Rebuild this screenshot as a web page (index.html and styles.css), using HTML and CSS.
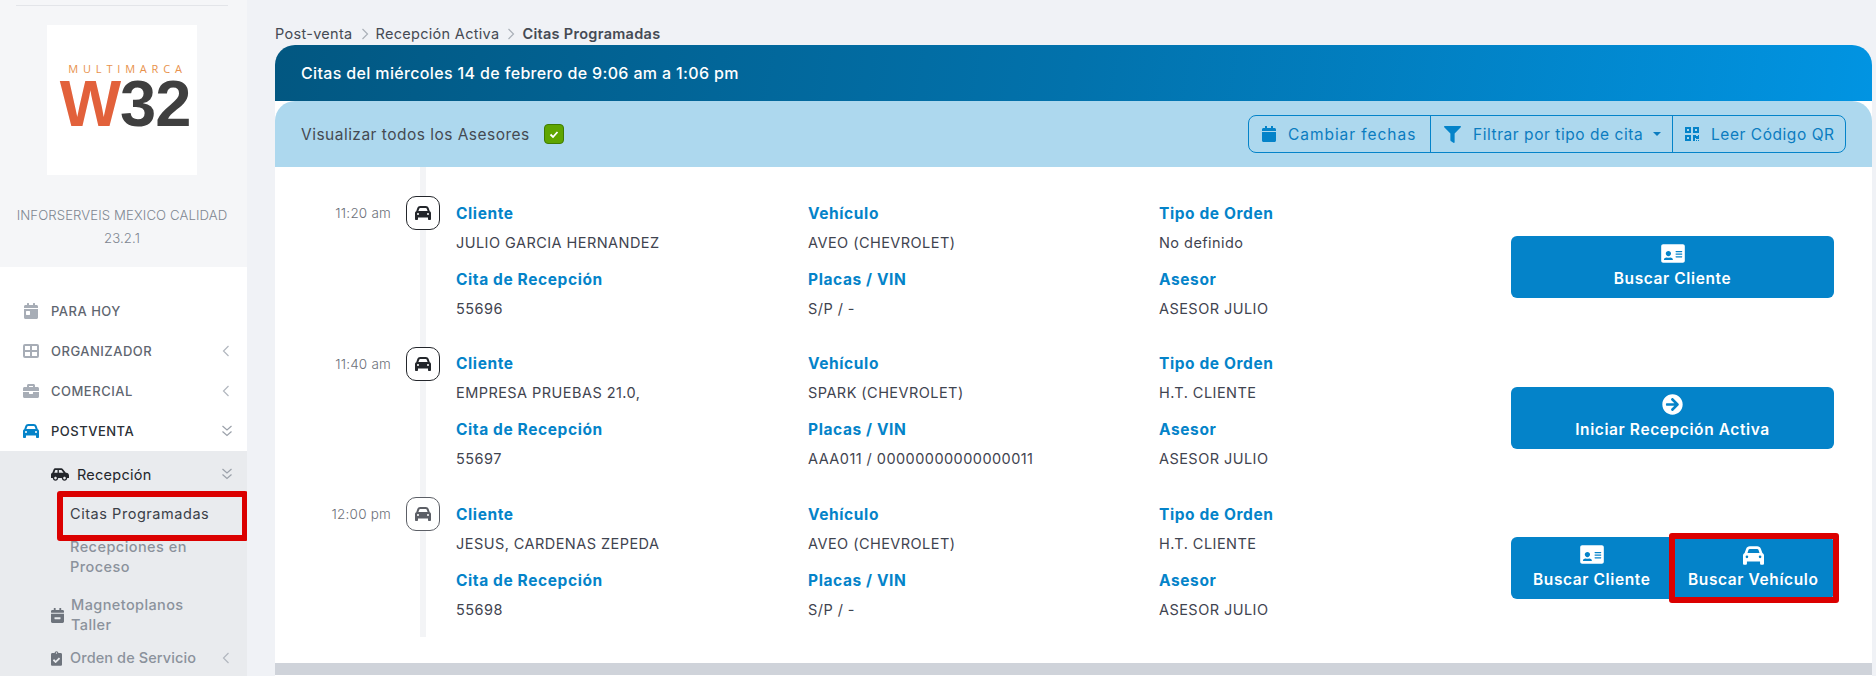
FILE: index.html
```html
<!DOCTYPE html>
<html lang="es">
<head>
<meta charset="utf-8">
<title>Citas Programadas</title>
<link rel="stylesheet" href="styles.css">
</head>
<body>
<svg class="defs" aria-hidden="true">
  <symbol id="i-car" viewBox="0 0 512 512"><path d="M135.2 117.4L109.1 192H402.9l-26.1-74.6C372.3 104.6 360.2 96 346.6 96H165.4c-13.6 0-25.7 8.6-30.2 21.4zM39.6 196.8L74.8 96.3C88.3 57.8 124.6 32 165.4 32H346.6c40.8 0 77.1 25.8 90.6 64.3l35.2 100.5c23.2 9.6 39.6 32.5 39.6 59.2V400v48c0 17.7-14.3 32-32 32H448c-17.7 0-32-14.3-32-32V400H96v48c0 17.7-14.3 32-32 32H32c-17.7 0-32-14.3-32-32V400 256c0-26.7 16.4-49.6 39.6-59.2zM128 288a32 32 0 1 0 -64 0 32 32 0 1 0 64 0zm288 32a32 32 0 1 0 0-64 32 32 0 1 0 0 64z"/></symbol>
  <symbol id="i-car-side" viewBox="0 0 640 512"><path d="M544 192h-16L419.22 56.02A64.025 64.025 0 0 0 369.24 32H155.33c-26.17 0-49.7 15.93-59.42 40.23L48 194.26C20.44 201.4 0 226.21 0 256v112c0 8.84 7.16 16 16 16h48c0 53.02 42.98 96 96 96s96-42.98 96-96h128c0 53.02 42.98 96 96 96s96-42.98 96-96h48c8.84 0 16-7.16 16-16v-80c0-53.02-42.98-96-96-96zM160 432c-26.47 0-48-21.53-48-48s21.53-48 48-48 48 21.53 48 48-21.53 48-48 48zm72-240H116.93l38.4-96H232v96zm48 0V96h89.24l76.8 96H280zm200 240c-26.47 0-48-21.53-48-48s21.53-48 48-48 48 21.53 48 48-21.53 48-48 48z"/></symbol>
  <symbol id="i-cal" viewBox="0 0 448 512"><path d="M12 192h424c6.6 0 12 5.4 12 12v260c0 26.5-21.5 48-48 48H48c-26.5 0-48-21.5-48-48V204c0-6.6 5.4-12 12-12zm436-44v-36c0-26.5-21.5-48-48-48h-48V12c0-6.6-5.4-12-12-12h-40c-6.6 0-12 5.4-12 12v52H160V12c0-6.6-5.4-12-12-12h-40c-6.6 0-12 5.4-12 12v52H48C21.5 64 0 85.5 0 112v36c0 6.6 5.4 12 12 12h424c6.6 0 12-5.4 12-12z"/></symbol>
  <symbol id="i-cal-day" viewBox="0 0 448 512"><path d="M0 464c0 26.5 21.5 48 48 48h352c26.5 0 48-21.5 48-48V192H0v272zm64-192c0-8.8 7.2-16 16-16h96c8.8 0 16 7.2 16 16v96c0 8.8-7.2 16-16 16H80c-8.8 0-16-7.2-16-16v-96zM400 64h-48V16c0-8.8-7.2-16-16-16h-32c-8.8 0-16 7.2-16 16v48H160V16c0-8.8-7.2-16-16-16h-32c-8.8 0-16 7.2-16 16v48H48C21.5 64 0 85.5 0 112v48h448v-48c0-26.5-21.5-48-48-48z"/></symbol>
  <symbol id="i-cal-minus" viewBox="0 0 448 512"><path d="M436 160H12c-6.6 0-12-5.4-12-12v-36c0-26.5 21.5-48 48-48h48V12c0-6.6 5.4-12 12-12h40c6.6 0 12 5.4 12 12v52h128V12c0-6.6 5.4-12 12-12h40c6.6 0 12 5.4 12 12v52h48c26.5 0 48 21.5 48 48v36c0 6.6-5.4 12-12 12zM12 192h424c6.6 0 12 5.4 12 12v260c0 26.5-21.5 48-48 48H48c-26.5 0-48-21.5-48-48V204c0-6.6 5.4-12 12-12zm304 192c6.6 0 12-5.4 12-12v-40c0-6.6-5.4-12-12-12H132c-6.6 0-12 5.4-12 12v40c0 6.6 5.4 12 12 12h184z"/></symbol>
  <symbol id="i-brief" viewBox="0 0 512 512"><path d="M320 336c0 8.84-7.16 16-16 16h-96c-8.84 0-16-7.16-16-16v-48H0v144c0 25.6 22.4 48 48 48h416c25.6 0 48-22.4 48-48V288H320v48zm144-208h-80V80c0-25.6-22.4-48-48-48H176c-25.6 0-48 22.4-48 48v48H48c-25.6 0-48 22.4-48 48v80h512v-80c0-25.6-22.4-48-48-48zm-144 0H192V96h128v32z"/></symbol>
  <symbol id="i-grid" viewBox="0 0 16 14"><path fill-rule="evenodd" d="M2 0h12a2 2 0 0 1 2 2v10a2 2 0 0 1-2 2H2a2 2 0 0 1-2-2V2a2 2 0 0 1 2-2zm0 2v4h5V2zm7 0v4h5V2zM2 8v4h5V8zm7 0v4h5V8z"/></symbol>
  <symbol id="i-clip" viewBox="0 0 384 512"><path d="M336 64h-80c0-35.3-28.7-64-64-64s-64 28.7-64 64H48C21.5 64 0 85.5 0 112v352c0 26.5 21.5 48 48 48h288c26.5 0 48-21.5 48-48V112c0-26.5-21.5-48-48-48zM192 40c13.3 0 24 10.7 24 24s-10.7 24-24 24-24-10.7-24-24 10.7-24 24-24zm121.2 231.8l-143 141.8c-4.7 4.7-12.3 4.6-17-.1l-82.6-83.3c-4.7-4.7-4.6-12.3.1-17L99.1 285c4.7-4.7 12.3-4.6 17 .1l46 46.4 106-105.2c4.7-4.7 12.3-4.6 17 .1l28.2 28.4c4.7 4.8 4.6 12.3-.1 17z"/></symbol>
  <symbol id="i-filter" viewBox="0 0 512 512"><path d="M487.976 0H24.028C2.71 0-8.047 25.866 7.058 40.971L192 225.941V432c0 7.831 3.821 15.17 10.237 19.662l80 55.98C298.02 518.69 320 507.493 320 487.98V225.941l184.947-184.97C520.021 25.896 509.338 0 487.976 0z"/></symbol>
  <symbol id="i-qr" viewBox="0 0 448 512"><path d="M0 224h192V32H0v192zM64 96h64v64H64V96zm192-64v192h192V32H256zm128 128h-64V96h64v64zM0 480h192V288H0v192zm64-128h64v64H64v-64zm352-64h32v128h-96v-32h-32v96h-64V288h96v32h64v-32zm0 160h32v32h-32v-32zm-64 0h32v32h-32v-32z"/></symbol>
  <symbol id="i-id" viewBox="0 0 576 512"><path fill-rule="evenodd" d="M528 32H48C21.5 32 0 53.5 0 80v352c0 26.5 21.5 48 48 48h480c26.5 0 48-21.5 48-48V80c0-26.5-21.5-48-48-48zM352 200c0-4.4 3.6-8 8-8h144c4.4 0 8 3.6 8 8v16c0 4.4-3.6 8-8 8H360c-4.4 0-8-3.6-8-8zm0 64c0-4.4 3.6-8 8-8h144c4.4 0 8 3.6 8 8v16c0 4.4-3.6 8-8 8H360c-4.4 0-8-3.6-8-8zm0 64c0-4.4 3.6-8 8-8h144c4.4 0 8 3.6 8 8v16c0 4.4-3.6 8-8 8H360c-4.4 0-8-3.6-8-8zM176 192c35.3 0 64 28.7 64 64s-28.7 64-64 64-64-28.7-64-64 28.7-64 64-64zM67.1 396.2C75.5 370.5 99.6 352 128 352h8.2c12.3 5.1 25.7 8 39.8 8s27.6-2.9 39.8-8h8.2c28.4 0 52.5 18.5 60.9 44.2 3.2 9.9-5.2 19.8-15.6 19.8H82.7c-10.4 0-18.8-10-15.6-19.8z"/></symbol>
  <symbol id="i-arrow" viewBox="0 0 512 512"><path d="M256 8c137 0 248 111 248 248S393 504 256 504 8 393 8 256 119 8 256 8zm-28.9 143.6l75.5 72.4H120c-13.3 0-24 10.7-24 24v16c0 13.3 10.7 24 24 24h182.6l-75.5 72.4c-9.7 9.3-9.9 24.8-.4 34.3l11 10.9c9.4 9.4 24.6 9.4 33.9 0L404.3 273c9.4-9.4 9.4-24.6 0-33.9L271.6 106.3c-9.4-9.4-24.6-9.4-33.9 0l-11 10.9c-9.5 9.6-9.3 25.1.4 34.4z"/></symbol>
  <symbol id="i-left" viewBox="0 0 8 12"><path d="M6.5 1 1.5 6l5 5" fill="none" stroke="currentColor" stroke-width="1.2"/></symbol>
  <symbol id="i-dbl" viewBox="0 0 12 12"><path d="M1.500 1 6 5l4.500-4M1.500 6.500 6 10.500l4.500-4" fill="none" stroke="currentColor" stroke-width="1.200"/></symbol>
  <symbol id="i-right" viewBox="0 0 8 12"><path d="M1.500 1l5 5-5 5" fill="none" stroke="currentColor" stroke-width="1.200"/></symbol>
</svg>

<div class="app">
  <aside class="sidebar">
    <div class="brand">
      <hr class="brand-rule">
      <div class="logo">
        <span class="logo-top">MULTIMARCA</span>
        <span class="logo-main"><span class="logo-w">W</span>32</span>
      </div>
      <p class="brand-name">INFORSERVEIS MEXICO CALIDAD<br>23.2.1</p>
    </div>
    <nav class="nav">
      <a class="nav-item"><svg class="nav-icon nav-icon-cal"><use href="#i-cal-day"/></svg><span class="nav-text">PARA HOY</span></a>
      <a class="nav-item"><svg class="nav-icon"><use href="#i-grid"/></svg><span class="nav-text">ORGANIZADOR</span><svg class="caret-left"><use href="#i-left"/></svg></a>
      <a class="nav-item"><svg class="nav-icon"><use href="#i-brief"/></svg><span class="nav-text">COMERCIAL</span><svg class="caret-left"><use href="#i-left"/></svg></a>
      <a class="nav-item nav-item-open"><svg class="nav-icon"><use href="#i-car"/></svg><span class="nav-text">POSTVENTA</span><svg class="caret-dbl"><use href="#i-dbl"/></svg></a>
    </nav>
    <div class="subnav">
      <a class="sub-head"><svg class="sub-car"><use href="#i-car-side"/></svg><span class="sub-text">Recepción</span><svg class="caret-dbl"><use href="#i-dbl"/></svg></a>
      <a class="sub-link sub-link-active">Citas Programadas<span class="mark-nav"></span></a>
      <a class="sub-link sub-link-two">Recepciones en<br>Proceso</a>
      <a class="sub-row sub-row-magneto"><svg class="sub-icon"><use href="#i-cal-minus"/></svg><span class="sub-text-muted">Magnetoplanos<br>Taller</span></a>
      <a class="sub-row sub-row-orden"><svg class="sub-icon sub-icon-clip"><use href="#i-clip"/></svg><span class="sub-text-muted">Orden de Servicio</span><svg class="caret-left"><use href="#i-left"/></svg></a>
    </div>
  </aside>

  <main class="main">
    <div class="crumbs">
      <span>Post-venta</span><svg class="crumb-sep"><use href="#i-right"/></svg>
      <span>Recepción Activa</span><svg class="crumb-sep"><use href="#i-right"/></svg>
      <strong>Citas Programadas</strong>
    </div>
    <header class="hero">Citas del miércoles 14 de febrero de 9:06 am a 1:06 pm</header>
    <section class="panel">
      <div class="toolbar">
        <label class="advisors">Visualizar todos los Asesores
          <span class="check"><svg viewBox="0 0 12 12"><path d="M2.500 6.500 5 9l4.500-5" fill="none" stroke="#fff" stroke-width="1.800"/></svg></span>
        </label>
        <div class="tools">
          <a class="tool tool-dates"><svg class="tool-icon"><use href="#i-cal"/></svg>Cambiar fechas</a>
          <a class="tool tool-filter"><svg class="tool-icon tool-icon-filter"><use href="#i-filter"/></svg>Filtrar por tipo de cita<span class="tool-caret"></span></a>
          <a class="tool tool-qr"><svg class="tool-icon"><use href="#i-qr"/></svg>Leer Código QR</a>
        </div>
      </div>

      <div class="agenda">
        <article class="appt">
          <time class="appt-time">11:20 am</time>
          <span class="appt-badge"><svg><use href="#i-car"/></svg></span>
          <div class="col">
            <h3>Cliente</h3><p>JULIO GARCIA HERNANDEZ</p>
            <h3>Cita de Recepción</h3><p>55696</p>
          </div>
          <div class="col">
            <h3>Vehículo</h3><p>AVEO (CHEVROLET)</p>
            <h3>Placas / VIN</h3><p>S/P / -</p>
          </div>
          <div class="col">
            <h3>Tipo de Orden</h3><p>No definido</p>
            <h3>Asesor</h3><p>ASESOR JULIO</p>
          </div>
          <div class="actions">
            <a class="btn btn-solo"><svg class="btn-id"><use href="#i-id"/></svg>Buscar Cliente</a>
          </div>
        </article>

        <article class="appt">
          <time class="appt-time">11:40 am</time>
          <span class="appt-badge"><svg><use href="#i-car"/></svg></span>
          <div class="col">
            <h3>Cliente</h3><p>EMPRESA PRUEBAS 21.0,</p>
            <h3>Cita de Recepción</h3><p>55697</p>
          </div>
          <div class="col">
            <h3>Vehículo</h3><p>SPARK (CHEVROLET)</p>
            <h3>Placas / VIN</h3><p>AAA011 / 00000000000000011</p>
          </div>
          <div class="col">
            <h3>Tipo de Orden</h3><p>H.T. CLIENTE</p>
            <h3>Asesor</h3><p>ASESOR JULIO</p>
          </div>
          <div class="actions">
            <a class="btn btn-solo"><svg class="btn-arrow"><use href="#i-arrow"/></svg>Iniciar Recepción Activa</a>
          </div>
        </article>

        <article class="appt appt-muted">
          <time class="appt-time">12:00 pm</time>
          <span class="appt-badge"><svg><use href="#i-car"/></svg></span>
          <div class="col">
            <h3>Cliente</h3><p>JESUS, CARDENAS ZEPEDA</p>
            <h3>Cita de Recepción</h3><p>55698</p>
          </div>
          <div class="col">
            <h3>Vehículo</h3><p>AVEO (CHEVROLET)</p>
            <h3>Placas / VIN</h3><p>S/P / -</p>
          </div>
          <div class="col">
            <h3>Tipo de Orden</h3><p>H.T. CLIENTE</p>
            <h3>Asesor</h3><p>ASESOR JULIO</p>
          </div>
          <div class="actions">
            <a class="btn btn-first"><svg class="btn-id"><use href="#i-id"/></svg>Buscar Cliente</a>
            <a class="btn btn-last"><svg class="btn-car"><use href="#i-car"/></svg>Buscar Vehículo<span class="mark-btn"></span></a>
          </div>
        </article>
      </div>
      <div class="panel-foot"></div>
    </section>
  </main>
</div>
</body>
</html>
```

FILE: styles.css
```css
* { box-sizing: border-box; }
html, body { margin: 0; height: 676px; overflow: hidden; }
body { font-family: Inter, "Noto Sans", "Liberation Sans", sans-serif; background: #f0f2f6; color: #3f4450; }
.defs { width: 0; height: 0; position: absolute; }
svg { fill: currentColor; display: block; flex: none; }
h3, p { margin: 0; }

.app { display: flex; height: 676px; }

/* Sidebar */
.sidebar { width: 247px; flex: none; display: flex; flex-direction: column; height: 676px; background: #e9ebee; }
.brand { height: 267px; background: #f5f6f8; padding: 5px 19px 0 16px; display: flex; flex-direction: column; align-items: center; }
.brand-rule { width: 212px; height: 1px; border: 0; margin: 0; background: #e3e5e9; flex: none; }
.logo { width: 150px; height: 150px; margin-top: 19px; background: #fff; display: flex; flex-direction: column; align-items: center; padding: 38px 0 0 6px; font-family: "Liberation Sans", sans-serif; flex: none; }
.logo-top { font-size: 11px; line-height: 12px; color: #e8914b; letter-spacing: 4.800px; margin-right: -5px; font-family: "Open Sans", sans-serif; }
.logo-main { font-size: 65px; line-height: 58px; font-weight: 700; color: #3f3f3f; letter-spacing: -1px; white-space: nowrap; }
.logo-w { color: #e2613b; }
.brand-name { margin: 29px 0 0; font-size: 13.200px; line-height: 23px; letter-spacing: .1px; text-align: center; color: #7e8691; font-weight: 300; white-space: nowrap; }

.nav { height: 184px; background: #fff; padding-top: 24px; }
.nav-item { height: 40px; display: flex; align-items: center; padding: 0 17px 0 23px; color: #5f6670; }
.nav-icon { width: 16px; height: 16px; margin-right: 12px; color: #a7adb6; }
.nav-icon-cal { width: 14px; margin-left: 1px; margin-right: 13px; }
.nav-text { flex: 1; font-size: 13px; font-weight: 500; letter-spacing: .5px; }
.nav-item-open { color: #2a2f36; }
.nav-item-open .nav-icon { color: #0483c9; }
.caret-left { width: 8px; height: 12px; color: #b2b7bf; }
.caret-dbl { width: 12px; height: 12px; color: #9ba1aa; margin-right: -3px; }

.subnav { flex: 1; padding-top: 3px; overflow: hidden; }
.sub-head { height: 40px; display: flex; align-items: center; padding: 0 17px 0 51px; color: #23262b; }
.sub-car { width: 18px; height: 15px; margin-right: 8px; }
.sub-text { flex: 1; font-size: 14.500px; font-weight: 400; letter-spacing: .25px; }
.sub-link { display: block; position: relative; height: 40px; padding-left: 70px; font-size: 14.500px; letter-spacing: .55px; line-height: 40px; font-weight: 400; color: #3b4048; }
.sub-link-two { height: 40px; margin-top: 3px; line-height: 20px; color: #8b929c; font-weight: 500; letter-spacing: .45px; }
.sub-row { display: flex; align-items: center; height: 40px; padding: 0 17px 0 51px; }
.sub-row-magneto { margin-top: 18px; }
.sub-row-orden { margin-top: 3px; }
.sub-row-orden .sub-text-muted { letter-spacing: .1px; }
.sub-icon { width: 13px; height: 15px; margin-right: 7px; color: #6d737c; }
.sub-icon-clip { width: 11px; margin-right: 8px; }
.sub-text-muted { flex: 1; font-size: 14.500px; letter-spacing: .4px; line-height: 20px; font-weight: 500; color: #8b929c; }
.mark-nav { position: absolute; left: 57px; top: -3px; width: 191px; height: 50px; border: 6px solid #db0000; border-radius: 3px; }

/* Main */
.main { flex: 1; min-width: 0; padding: 0 4px 0 28px; display: flex; flex-direction: column; }
.crumbs { height: 45px; padding-top: 24px; display: flex; align-items: flex-start; font-size: 14.500px; letter-spacing: .3px; line-height: 20px; color: #454a54; white-space: nowrap; }
.crumbs strong { font-weight: 600; letter-spacing: .3px; }
.crumb-sep { width: 8px; height: 12px; margin: 4px 7px 0 8px; color: #aab0b8; }
.hero { height: 56px; padding: 0 26px; display: flex; align-items: center; border-radius: 20px 20px 0 0; background: linear-gradient(100deg, #025781 0%, #0272ac 50%, #0194e2 100%); color: #fff; font-size: 16px; letter-spacing: .35px; font-weight: 500; }
.panel { flex: 1; background: #fff; display: flex; flex-direction: column; }
.toolbar { height: 66px; padding: 0 26px 0 26px; display: flex; align-items: center; justify-content: space-between; background: #add8ee; border-radius: 20px 20px 0 0; }
.advisors { display: flex; align-items: center; gap: 14px; font-size: 15.500px; letter-spacing: .48px; color: #454a52; }
.check { width: 20px; height: 20px; border-radius: 4px; background: #5fa500; border: 1px solid #3f7c02; display: flex; align-items: center; justify-content: center; }
.check svg { width: 12px; height: 12px; }
.tools { display: flex; height: 38px; border: 1px solid #0483c9; border-radius: 8px; color: #0b7cc0; font-size: 15.500px; letter-spacing: .55px; font-weight: 400; }
.tool { display: flex; align-items: center; white-space: nowrap; border-left: 1px solid #0483c9; }
.tool:first-child { border-left: 0; }
.tool-dates { width: 181px; padding-left: 13px; letter-spacing: .95px; }
.tool-filter { width: 242px; padding-left: 13px; }
.tool-qr { width: 173px; padding-left: 12px; }
.tool-icon { width: 14px; height: 16px; margin-right: 12px; color: #0483c9; }
.tool-icon-filter { width: 17px; height: 17px; margin-right: 12px; }
.tool-caret { width: 0; height: 0; margin-left: 10px; border: 4px solid transparent; border-top-color: #0b7cc0; border-bottom: 0; }

/* Agenda */
.agenda { height: 496px; padding-top: 29px; position: relative; }
.agenda::before { content: ""; position: absolute; left: 145px; top: 0; bottom: 26px; width: 6px; background: #f3f4f6; }
.appt { display: flex; height: 150.500px; position: relative; }
.appt-time { width: 116px; padding-top: 7px; text-align: right; font-size: 13.500px; letter-spacing: .2px; line-height: 20px; font-weight: 300; color: #6c7079; }
.appt-badge { width: 34px; height: 34px; margin: 0 16px 0 15px; border: 1px solid #23262b; border-radius: 10px; background: #fff; color: #23262b; display: flex; align-items: center; justify-content: center; }
.appt-badge svg { width: 16px; height: 16px; }
.appt-muted .appt-badge { border-color: #5c5f66; color: #5c5f66; }
.col { width: 352px; flex: none; padding-top: 7.500px; }
.col:nth-of-type(2) { width: 351px; }
.col h3 { font-size: 15.500px; letter-spacing: .6px; line-height: 20px; font-weight: 700; color: #0483c9; }
.col p { font-size: 14.500px; letter-spacing: .45px; line-height: 20px; margin-top: 9px; margin-bottom: 17px; color: #3f4450; font-weight: 400; white-space: nowrap; }
.actions { width: 323px; flex: none; padding-top: 40px; display: flex; align-items: flex-start; }
.btn { height: 62px; flex: 1; position: relative; background: #0483c9; color: #fff; display: flex; flex-direction: column; align-items: center; padding-top: 8px; font-size: 15.500px; letter-spacing: .6px; line-height: 22px; font-weight: 600; white-space: nowrap; }
.btn-solo { border-radius: 6px; }
.btn-first { border-radius: 6px 0 0 6px; }
.btn-last { border-radius: 0 6px 6px 0; }
.btn .btn-id { width: 24px; height: 21px; margin: -1px 0 4px; }
.btn .btn-arrow { width: 21px; height: 21px; margin: -1px 0 4px; }
.btn .btn-car { width: 21px; height: 21px; margin: 0 0 3px; }
.mark-btn { position: absolute; left: -4px; right: -5px; top: -4px; bottom: -4px; border: 6px solid #db0000; border-radius: 3px; }
.panel-foot { height: 12px; background: #cfd3da; }
```
